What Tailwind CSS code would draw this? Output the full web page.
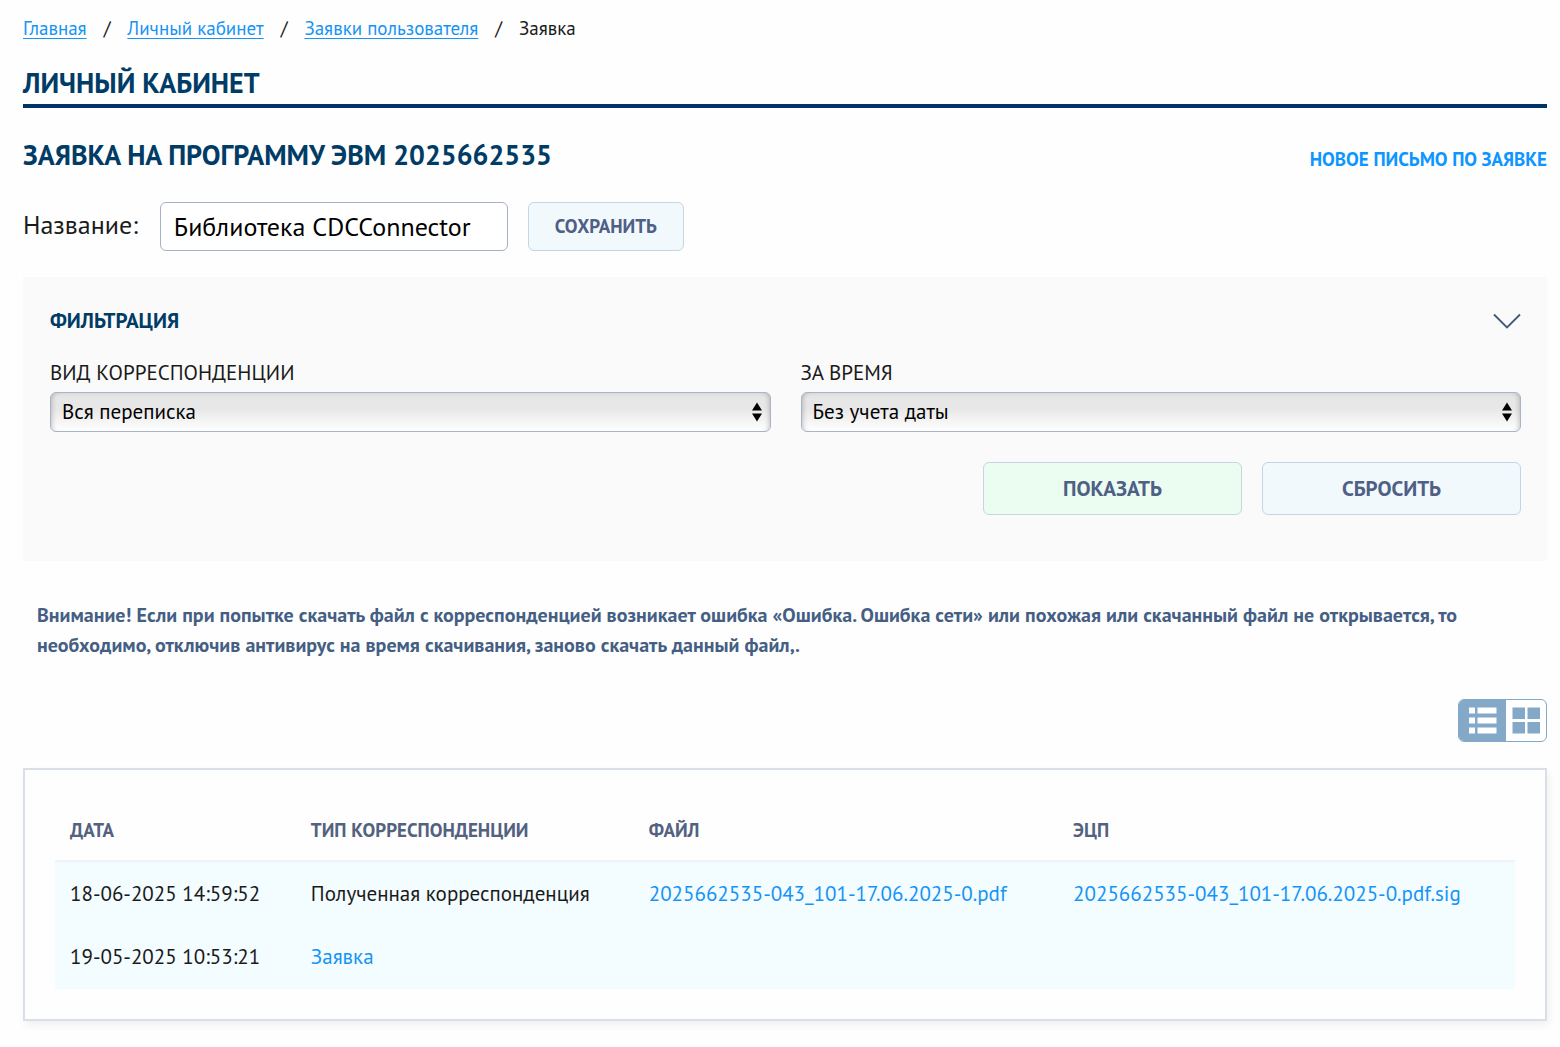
<!DOCTYPE html>
<html lang="ru">

<head>
    <meta charset="UTF-8">
    <meta name="viewport" content="width=device-width, initial-scale=1.0">
    <title>Личный кабинет - Заявка</title>
    <script src="https://cdn.jsdelivr.net/npm/@tailwindcss/browser@4"></script>
</head>

<body class="bg-[#fefefe] text-[#1a1a1a] font-['PT_Sans','Noto_Sans',sans-serif] pl-[23px] pr-[13px] pt-4 pb-6">

    <!-- Breadcrumbs -->
    <nav class="text-[19px] leading-6">
        <ol class="flex">
            <li><a href="#" class="text-[#1694f5] underline underline-offset-3">Главная</a><span class="px-[17px]">/</span></li>
            <li><a href="#" class="text-[#1694f5] underline underline-offset-3">Личный кабинет</a><span class="px-[17px]">/</span></li>
            <li><a href="#" class="text-[#1694f5] underline underline-offset-3">Заявки пользователя</a><span class="px-[17px]">/</span></li>
            <li>Заявка</li>
        </ol>
    </nav>

    <h1 class="mt-[25px] pb-[3px] border-b-4 border-[#003466] text-[28px] leading-9 font-bold text-[#003c66]">ЛИЧНЫЙ КАБИНЕТ</h1>

    <div class="mt-[29px] flex justify-between items-center">
        <h2 class="text-[28px] leading-9 font-bold text-[#003c66]">ЗАЯВКА НА ПРОГРАММУ ЭВМ 2025662535</h2>
        <a href="#" class="pt-2 text-[19px] leading-7 font-bold text-[#0d96ff]">НОВОЕ ПИСЬМО ПО ЗАЯВКЕ</a>
    </div>

    <!-- Application name -->
    <form class="mt-[29px] flex items-center gap-5">
        <label for="name" class="pr-[2px] pb-1 text-[26px] leading-[34px]">Название:</label>
        <input id="name" type="text" value="Библиотека CDCConnector" class="w-[348px] h-[49px] px-[13px] bg-white border border-[#a5b1c4] rounded-md text-[26px] text-black">
        <button type="button" class="w-[156px] h-[49px] bg-[#f1f9fd] border border-[#c5d5e4] rounded-md text-[19px] font-bold text-[#4f5f85]">СОХРАНИТЬ</button>
    </form>

    <!-- Filter -->
    <form class="mt-[26px] pl-[27px] pr-[26px] pt-[30px] pb-[46px] bg-[#fafafa]">
        <div class="flex justify-between items-center">
            <h3 class="text-[21px] leading-7 font-bold text-[#003c66]">ФИЛЬТРАЦИЯ</h3>
            <button type="button" aria-label="Свернуть">
                <svg class="w-7 h-4" viewBox="0 0 28 16" fill="none" stroke="#3f587b" stroke-width="1.8">
                    <path d="M1 1.5L14 14.5L27 1.5" />
                </svg>
            </button>
        </div>

        <div class="mt-6 grid grid-cols-2 gap-[30px]">
            <div>
                <label for="kind" class="block text-[21px] leading-7">ВИД КОРРЕСПОНДЕНЦИИ</label>
                <div class="relative mt-[5px]">
                    <select id="kind" class="block appearance-none w-full h-10 px-[11px] border border-[#a9b5c6] rounded-md bg-linear-to-b from-[#e7e7e7] from-40% to-white shadow-[inset_0_4px_6px_-4px_rgba(0,0,0,0.1),inset_5px_0_5px_-4px_rgba(0,0,0,0.2),inset_-5px_0_5px_-4px_rgba(0,0,0,0.2)] text-[21px] text-black">
                        <option>Вся переписка</option>
                    </select>
                    <svg class="absolute right-[9px] top-[10px] w-[10px] h-5 pointer-events-none" viewBox="0 0 10 20" fill="#000">
                        <path d="M0 8.5L5 0.5L10 8.5Z M0 11.5L5 19.5L10 11.5Z" />
                    </svg>
                </div>
            </div>
            <div>
                <label for="period" class="block text-[21px] leading-7">ЗА ВРЕМЯ</label>
                <div class="relative mt-[5px]">
                    <select id="period" class="block appearance-none w-full h-10 px-[11px] border border-[#a9b5c6] rounded-md bg-linear-to-b from-[#e7e7e7] from-40% to-white shadow-[inset_0_4px_6px_-4px_rgba(0,0,0,0.1),inset_5px_0_5px_-4px_rgba(0,0,0,0.2),inset_-5px_0_5px_-4px_rgba(0,0,0,0.2)] text-[21px] text-black">
                        <option>Без учета даты</option>
                    </select>
                    <svg class="absolute right-[9px] top-[10px] w-[10px] h-5 pointer-events-none" viewBox="0 0 10 20" fill="#000">
                        <path d="M0 8.5L5 0.5L10 8.5Z M0 11.5L5 19.5L10 11.5Z" />
                    </svg>
                </div>
            </div>
        </div>

        <div class="mt-[30px] flex justify-end gap-5">
            <button type="button" class="w-[259px] h-[53px] bg-[#ebfdf0] border border-[#c5d5e4] rounded-md text-[21px] font-bold text-[#4f5f85]">ПОКАЗАТЬ</button>
            <button type="button" class="w-[259px] h-[53px] bg-[#f1f9fd] border border-[#c5d5e4] rounded-md text-[21px] font-bold text-[#4f5f85]">СБРОСИТЬ</button>
        </div>
    </form>

    <p class="mt-[39px] px-[14px] text-[20px] leading-[30px] font-bold text-[#455f84]">Внимание! Если при попытке скачать файл с корреспонденцией возникает ошибка «Ошибка. Ошибка сети» или похожая или скачанный файл не открывается, то необходимо, отключив антивирус на время скачивания, заново скачать данный файл,.</p>

    <!-- View switch -->
    <div class="mt-[39px] flex justify-end">
        <div class="flex h-[43px] border border-[#83a8c8] rounded-md overflow-hidden bg-white">
            <button type="button" aria-label="Список" class="w-[47px] flex justify-center items-center bg-[#83a8c8]">
                <svg class="w-7 h-[27px]" viewBox="0 0 28 27" fill="#fff">
                    <path d="M0 0.5h6v6H0z M8.5 0.5h19v6H8.5z M0 10.5h6v6H0z M8.5 10.5h19v6H8.5z M0 20.5h6v6H0z M8.5 20.5h19v6H8.5z" />
                </svg>
            </button>
            <button type="button" aria-label="Плитка" class="w-10 flex justify-center items-center">
                <svg class="w-7 h-[27px]" viewBox="0 0 28 27" fill="#83a8c8">
                    <path d="M0.5 0.5h12.5v11.5H0.5z M15.5 0.5h12.5v11.5H15.5z M0.5 15h12.5v11.5H0.5z M15.5 15h12.5v11.5H15.5z" />
                </svg>
            </button>
        </div>
    </div>

    <!-- Correspondence -->
    <div class="mt-[26px] p-[30px] bg-[#fefefe] border-2 border-[#d8dfe9] shadow-[2px_4px_8px_rgba(0,0,0,0.06)]">
        <table class="w-full text-left">
            <thead>
                <tr class="h-[61px] text-[19px] text-[#52627f] border-b-2 border-[#eff3f7]">
                    <th class="px-[15px]">ДАТА</th>
                    <th class="px-[15px]">ТИП КОРРЕСПОНДЕНЦИИ</th>
                    <th class="px-[15px]">ФАЙЛ</th>
                    <th class="px-[15px]">ЭЦП</th>
                </tr>
            </thead>
            <tbody class="bg-[#f3fcff] text-[21px] whitespace-nowrap">
                <tr class="h-16">
                    <td class="px-[15px]">18-06-2025 14:59:52</td>
                    <td class="px-[15px]">Полученная корреспонденция</td>
                    <td class="px-[15px]"><a href="#" class="text-[#1694f5]">2025662535-043_101-17.06.2025-0.pdf</a></td>
                    <td class="px-[15px]"><a href="#" class="text-[#1694f5]">2025662535-043_101-17.06.2025-0.pdf.sig</a></td>
                </tr>
                <tr class="h-16">
                    <td class="px-[15px]">19-05-2025 10:53:21</td>
                    <td class="px-[15px]"><a href="#" class="text-[#1694f5]">Заявка</a></td>
                    <td class="px-[15px]"></td>
                    <td class="px-[15px]"></td>
                </tr>
            </tbody>
        </table>
    </div>

</body>

</html>
